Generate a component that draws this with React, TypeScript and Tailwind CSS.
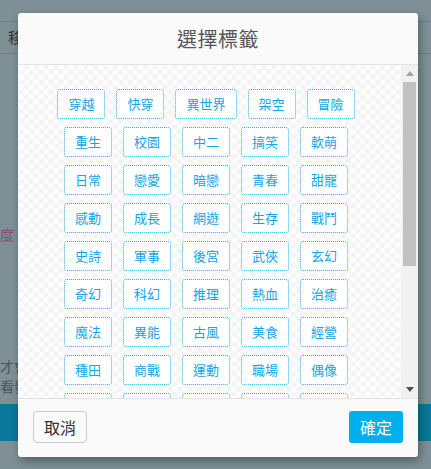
import React from "react";

const tags = [
  "穿越", "快穿", "異世界", "架空", "冒險",
  "重生", "校園", "中二", "搞笑", "軟萌",
  "日常", "戀愛", "暗戀", "青春", "甜寵",
  "感動", "成長", "網遊", "生存", "戰鬥",
  "史詩", "軍事", "後宮", "武俠", "玄幻",
  "奇幻", "科幻", "推理", "熱血", "治癒",
  "魔法", "異能", "古風", "美食", "經營",
  "種田", "商戰", "運動", "職場", "偶像",
  "靈異", "懸疑", "末世", "星際", "機甲",
  "宮鬥", "宅鬥", "修仙", "末日", "系統",
];

export default function App() {
  return (
    <div
      className="relative h-[469px] w-[431px] overflow-hidden bg-[#7e9096]"
      style={{ fontFamily: '"Noto Sans CJK TC", "Noto Sans", sans-serif' }}
    >
      {/* underlying page */}
      <div className="h-[21px]" />
      <div className="flex h-[33px] items-center border-y border-[#6e8086] pl-[8px] text-[15px] text-[#2e3639]">
        移動
      </div>
      <div className="h-[171px]" />
      <div className="h-[18px] text-[14px] leading-[18px] text-[#8a4a78]">度</div>
      <div className="h-[113px]" />
      <div className="text-[14px] leading-[20px] text-[#4b5559]">
        <div>才會</div>
        <div>看發</div>
      </div>
      <div className="mt-[8px] h-[37px] bg-[#0a789a]" />

      {/* modal */}
      <div className="absolute left-[18px] top-[13px] flex w-[400px] flex-col rounded-[3px] bg-[#fafafa] shadow-[2px_4px_10px_rgba(0,0,0,0.35)]">
        <div className="flex h-[52px] items-center justify-center border-b border-[#e3e3e3] text-[20px] tracking-[0.5px] text-[#555]">
          選擇標籤
        </div>
        <div className="flex h-[333px] bg-white">
          <div className="flex-1 overflow-hidden bg-[image:repeating-linear-gradient(45deg,rgba(0,0,0,0.022)_0_3.5px,transparent_3.5px_7px),repeating-linear-gradient(-45deg,rgba(0,0,0,0.022)_0_3.5px,transparent_3.5px_7px)] pl-[36px] pr-[43px] pt-[24px]">
            <div className="flex flex-wrap justify-center gap-x-[11px] gap-y-[8px]">
              {tags.map((t) => (
                <div
                  key={t}
                  className="flex h-[30px] items-center rounded-[3px] border border-dotted border-[#1fb3ee] bg-white px-[10px] text-[13px] text-[#12a6e6]"
                >
                  {t}
                </div>
              ))}
            </div>
          </div>
          <div className="flex w-[17px] flex-col items-center bg-[#f1f1f1]">
            <div className="flex h-[17px] items-center justify-center">
              <svg width="8" height="5" viewBox="0 0 8 5">
                <path d="M0 5 L4 0 L8 5 Z" fill="#a3a3a3" />
              </svg>
            </div>
            <div className="h-[184px] w-[13px] bg-[#c1c1c1]" />
            <div className="flex-1" />
            <div className="flex h-[17px] items-center justify-center">
              <svg width="8" height="5" viewBox="0 0 8 5">
                <path d="M0 0 L8 0 L4 5 Z" fill="#505050" />
              </svg>
            </div>
          </div>
        </div>
        <div className="flex h-[59px] items-start justify-between border-t border-[#e3e3e3] px-[15px] pt-[12px]">
          <button className="flex h-[32px] items-center rounded-[4px] border border-[#cccccc] bg-[#fafafa] px-[10px] text-[16px] text-[#333]">
            取消
          </button>
          <button className="flex h-[32px] items-center rounded-[3px] bg-[#00b0ec] px-[11px] text-[16px] text-white">
            確定
          </button>
        </div>
      </div>
    </div>
  );
}
